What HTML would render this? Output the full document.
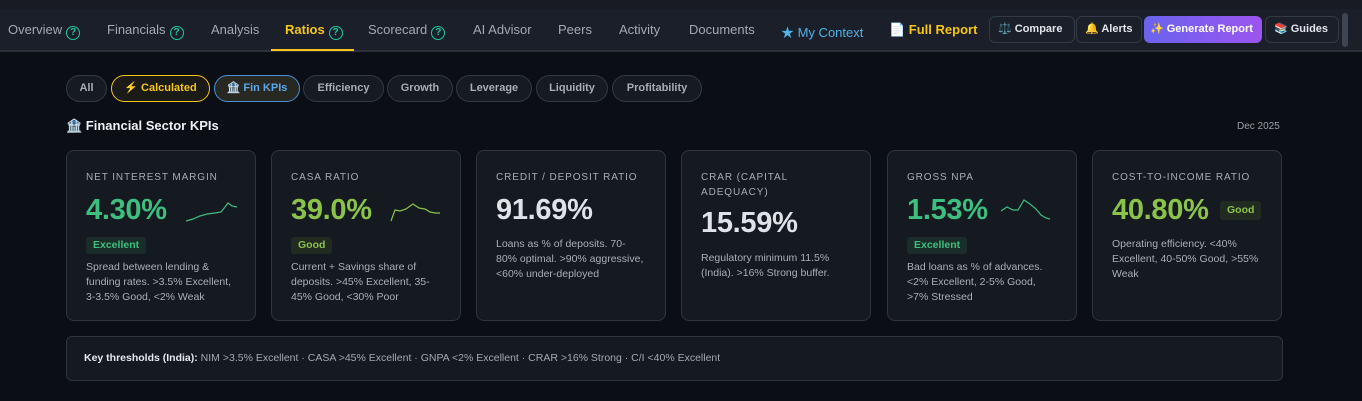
<!DOCTYPE html>
<html><head><meta charset="utf-8"><style>
*{box-sizing:border-box;margin:0;padding:0}
body{width:1362px;height:401px;background:#0b0e15;font-family:"Liberation Sans","Noto Sans CJK SC",sans-serif;position:relative;overflow:hidden;color:#e6e8ec}
.nav{position:absolute;left:0;top:0;width:1362px;height:52px;background:#1b1f29;border-bottom:2px solid #2b303b}
.nav .top{position:absolute;left:0;top:0;width:100%;height:9px;background:#181b23}
.t{position:absolute;top:22px;font-size:13px;color:#a3a8b3;white-space:nowrap}
.q{display:inline-block;width:14px;height:14px;border:1.5px solid #22c7a0;border-radius:50%;color:#22c7a0;font-size:10px;text-align:center;line-height:11px;font-weight:bold;margin-left:4px;vertical-align:-1px}
.btn{position:absolute;top:16px;height:27px;border:1px solid #333945;border-radius:6px;font-size:11px;font-weight:bold;color:#e3e5ea;line-height:25px;padding:0 8px;white-space:nowrap;overflow:hidden}
.pill{position:absolute;top:75px;height:27px;border:1px solid #343a45;border-radius:14px;background:#161a22;font-size:11px;font-weight:bold;color:#a7acb6;line-height:25px;text-align:center}
.card{position:absolute;top:150px;width:190px;height:171px;background:#151920;border:1px solid #2e3440;border-radius:8px;padding:0 19px}
.lab{position:absolute;left:19px;top:19px;font-size:10px;letter-spacing:0.9px;color:#a6abb5;line-height:15px}
.val{position:absolute;left:19px;top:43px;font-size:29px;font-weight:bold;letter-spacing:-.3px}
.badge{position:absolute;left:19px;top:86px;height:17px;border-radius:3px;font-size:10.5px;font-weight:bold;line-height:17px;padding:0 7px}
.ex{background:#1a2d28;color:#3fbf7f}.gd{background:#222b22;color:#8bc34a}
.desc{position:absolute;left:19px;font-size:10.5px;line-height:15px;color:#a9aeb8;width:150px}
svg.sp{position:absolute;top:45px}
</style></head><body>
<div class="nav"><div class="top"></div>
<div class="t" style="left:8px">Overview<span class="q">?</span></div>
<div class="t" style="left:107px">Financials<span class="q">?</span></div>
<div class="t" style="left:211px">Analysis</div>
<div class="t" style="left:285px;color:#f5c518;font-weight:bold">Ratios<span class="q">?</span></div>
<div style="position:absolute;left:271px;top:49px;width:83px;height:2px;background:#f5c518"></div>
<div class="t" style="left:368px">Scorecard<span class="q">?</span></div>
<div class="t" style="left:473px">AI Advisor</div>
<div class="t" style="left:558px">Peers</div>
<div class="t" style="left:619px">Activity</div>
<div class="t" style="left:689px">Documents</div>
<div class="t" style="left:781px;color:#4fb3e8">★ My Context</div>
<div class="t" style="left:889px;color:#f5c518;font-weight:bold">📄 Full Report</div>
<div class="btn" style="left:989px;width:86px">⚖️ Compare</div>
<div class="btn" style="left:1076px;width:66px">🔔 Alerts</div>
<div class="btn" style="left:1144px;width:118px;border:none;background:linear-gradient(90deg,#6a63ee,#9b55ef);color:#fff;line-height:27px;padding:0 6px">✨ Generate Report</div>
<div class="btn" style="left:1265px;width:74px">📚 Guides</div>
<div style="position:absolute;left:1342px;top:13px;width:6px;height:34px;border-radius:3px;background:#3d4552"></div>
</div>

<div class="pill" style="left:66px;width:41px">All</div>
<div class="pill" style="left:111px;width:99px;border-color:#f5c518;color:#f5c518;background:#1a1a16">⚡ Calculated</div>
<div class="pill" style="left:214px;width:86px;border-color:#4a90d9;color:#5aa7ec;background:#272821">🏦 Fin KPIs</div>
<div class="pill" style="left:303px;width:81px">Efficiency</div>
<div class="pill" style="left:387px;width:66px">Growth</div>
<div class="pill" style="left:456px;width:76px">Leverage</div>
<div class="pill" style="left:536px;width:72px">Liquidity</div>
<div class="pill" style="left:612px;width:90px">Profitability</div>

<div style="position:absolute;left:66px;top:118px;font-size:13px;font-weight:bold;color:#eef0f3">🏦 Financial Sector KPIs</div>
<div style="position:absolute;left:1237px;top:121px;font-size:10px;color:#9aa0aa">Dec 2025</div>

<div class="card" style="left:66px"><div class="lab">NET INTEREST MARGIN</div><div class="val" style="color:#3fbf7f">4.30%</div>
<svg class="sp" style="left:118px" width="54" height="30"><polyline fill="none" stroke="#3fbf7f" stroke-width="1.2" points="1,25 8,23 15,20 22,18 30,17 36,16 40,11 43,7 47,10 52,11"/></svg>
<div class="badge ex">Excellent</div><div class="desc" style="top:109px">Spread between lending &amp; funding rates. &gt;3.5% Excellent, 3-3.5% Good, &lt;2% Weak</div></div>

<div class="card" style="left:271px"><div class="lab">CASA RATIO</div><div class="val" style="color:#8bc34a">39.0%</div>
<svg class="sp" style="left:118px" width="54" height="30"><polyline fill="none" stroke="#8bc34a" stroke-width="1.2" points="1,25 5,14 10,15 16,13 23,8 29,12 35,13 40,16 45,17 50,17"/></svg>
<div class="badge gd">Good</div><div class="desc" style="top:109px">Current + Savings share of deposits. &gt;45% Excellent, 35-45% Good, &lt;30% Poor</div></div>

<div class="card" style="left:476px"><div class="lab">CREDIT / DEPOSIT RATIO</div><div class="val" style="color:#dfe2e7">91.69%</div>
<div class="desc" style="top:86px">Loans as % of deposits. 70-80% optimal. &gt;90% aggressive, &lt;60% under-deployed</div></div>

<div class="card" style="left:681px"><div class="lab">CRAR (CAPITAL<br>ADEQUACY)</div><div class="val" style="color:#dfe2e7;top:56px">15.59%</div>
<div class="desc" style="top:100px">Regulatory minimum 11.5% (India). &gt;16% Strong buffer.</div></div>

<div class="card" style="left:887px"><div class="lab">GROSS NPA</div><div class="val" style="color:#3fbf7f">1.53%</div>
<svg class="sp" style="left:112px" width="54" height="30"><polyline fill="none" stroke="#3fbf7f" stroke-width="1.2" points="1,15 7,11 13,14 18,14 24,4 30,8 36,13 41,19 46,22 50,23"/></svg>
<div class="badge ex">Excellent</div><div class="desc" style="top:109px">Bad loans as % of advances. &lt;2% Excellent, 2-5% Good, &gt;7% Stressed</div></div>

<div class="card" style="left:1092px"><div class="lab">COST-TO-INCOME RATIO</div><div class="val" style="color:#8bc34a">40.80%</div>
<div class="badge gd" style="left:127px;top:50px;height:19px;line-height:19px">Good</div>
<div class="desc" style="top:86px">Operating efficiency. &lt;40% Excellent, 40-50% Good, &gt;55% Weak</div></div>

<div style="position:absolute;left:66px;top:336px;width:1217px;height:45px;background:#151920;border:1px solid #2e3440;border-radius:6px;padding-left:17px;line-height:43px;font-size:10.5px;color:#a3a8b2"><b style="color:#e6e8ec">Key thresholds (India):</b> NIM &gt;3.5% Excellent · CASA &gt;45% Excellent · GNPA &lt;2% Excellent · CRAR &gt;16% Strong · C/I &lt;40% Excellent</div>
</body></html>
